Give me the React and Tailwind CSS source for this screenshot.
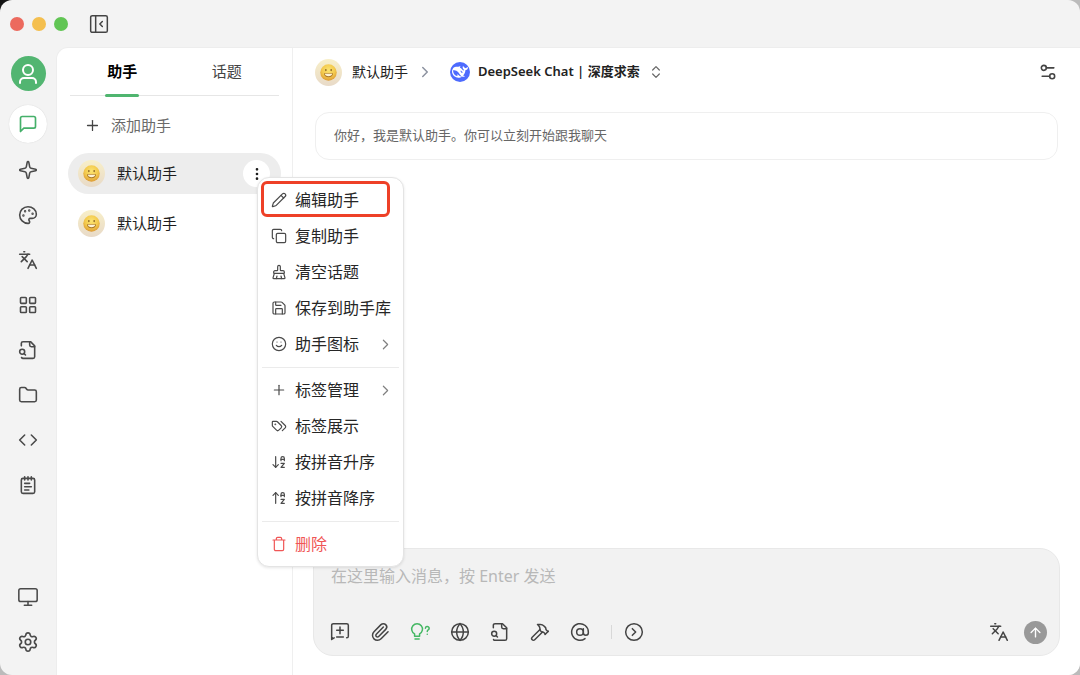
import React from 'react';
import {
  ArrowDownAZ,
  ArrowUp,
  ArrowUpAZ,
  AtSign,
  BrushCleaning,
  ChevronRight,
  ChevronsUpDown,
  CircleChevronRight,
  Code,
  Copy,
  EllipsisVertical,
  Folder,
  Globe,
  Hammer,
  Languages,
  LayoutGrid,
  Monitor,
  NotepadText,
  Palette,
  Paperclip,
  Pencil,
  Plus,
  Save,
  Settings,
  Settings2,
  Smile,
  Sparkle,
} from 'lucide-react';

function Stroke({ size = 20, strokeWidth = 1.6, children }) {
  return (
    <svg
      width={size}
      height={size}
      viewBox="0 0 24 24"
      fill="none"
      stroke="currentColor"
      strokeWidth={strokeWidth}
      strokeLinecap="round"
      strokeLinejoin="round"
      aria-hidden="true"
    >
      {children}
    </svg>
  );
}

const PanelIcon = (p) => (
  <Stroke {...p}>
    <rect x="2" y="2" width="20" height="20" rx="2" />
    <path d="M8 2v20M16 9l-3 3 3 3" />
  </Stroke>
);

const ChatIcon = (p) => (
  <Stroke {...p}>
    <path d="M21 15a2 2 0 0 1-2 2H7l-4 4V5a2 2 0 0 1 2-2h14a2 2 0 0 1 2 2z" />
  </Stroke>
);

const FileSearchIcon = (p) => (
  <Stroke {...p}>
    <path d="M14 2v4a2 2 0 0 0 2 2h4" />
    <path d="M4.268 21a2 2 0 0 0 1.727 1H18a2 2 0 0 0 2-2V7l-5-5H6a2 2 0 0 0-2 2v3" />
    <path d="m9 18-1.5-1.5" />
    <circle cx="5" cy="14" r="3" />
  </Stroke>
);

const NewTopicIcon = (p) => (
  <Stroke {...p}>
    <path d="m3 19-1 2V4a2 2 0 0 1 2-2h16a2 2 0 0 1 2 2v13a2 2 0 0 1-2 2M2 21l3-2" />
    <path d="M8 10h8M12 6v8M8 18h8" />
  </Stroke>
);

const TrashIcon = (p) => (
  <Stroke {...p}>
    <path d="M3 6h18M19 6v14a2 2 0 0 1-2 2H7a2 2 0 0 1-2-2V6M8 6V4a2 2 0 0 1 2-2h4a2 2 0 0 1 2 2v2" />
  </Stroke>
);

const TagsIcon = (p) => (
  <Stroke {...p}>
    <path d="m15 5 6.3 6.3a2.4 2.4 0 0 1 0 3.4L17 19" />
    <path d="M9.586 5.586A2 2 0 0 0 8.172 5H3a1 1 0 0 0-1 1v5.172a2 2 0 0 0 .586 1.414L8.29 18.29a2.426 2.426 0 0 0 3.42 0l3.58-3.58a2.426 2.426 0 0 0 0-3.42z" />
    <circle cx="6.5" cy="9.5" r=".5" fill="currentColor" />
  </Stroke>
);

const BulbIcon = (p) => (
  <Stroke {...p}>
    <path d="M5.5 14.3a6.500 6.500 0 1 1 6 0V17h-6zM6 20.500h5" />
    <path d="M18.500 7.500a2.200 2.200 0 1 1 3.300 1.900c-.7.4-1.100.9-1.100 1.900M20.700 14.600v.1" />
  </Stroke>
);

function UserIcon() {
  return (
    <Stroke size={24} strokeWidth={2}>
      <circle cx="12" cy="8" r="5" />
      <path d="M4 21v-1a4 4 0 0 1 4-4h8a4 4 0 0 1 4 4v1" />
    </Stroke>
  );
}

function DeepSeekLogo() {
  return (
    <span className="flex size-5 items-center justify-center rounded-full bg-[#4d6bfe] text-white">
      <svg width="16" height="16" viewBox="0 0 24 24" fill="currentColor" aria-hidden="true">
        <path d="M23.748 4.482c-.254-.124-.364.113-.512.234-.051.039-.094.09-.137.136-.372.397-.806.657-1.373.626-.829-.046-1.537.214-2.163.848-.133-.782-.575-1.248-1.247-1.548-.352-.156-.708-.311-.955-.65-.172-.241-.219-.51-.305-.774-.055-.16-.11-.323-.293-.35-.2-.031-.278.136-.356.276-.313.572-.434 1.202-.422 1.84.027 1.436.633 2.58 1.838 3.393.137.093.172.187.129.323-.082.28-.18.552-.266.833-.055.179-.137.217-.329.14a5.526 5.526 0 01-1.736-1.18c-.857-.828-1.631-1.742-2.597-2.458a11.365 11.365 0 00-.689-.471c-.985-.957.13-1.743.388-1.836.27-.098.093-.432-.779-.428-.872.004-1.67.295-2.687.684a3.055 3.055 0 01-.465.137 9.597 9.597 0 00-2.883-.102c-1.885.21-3.39 1.102-4.497 2.623C.082 8.606-.231 10.684.152 12.85c.403 2.284 1.569 4.175 3.36 5.653 1.858 1.533 3.997 2.284 6.438 2.14 1.482-.085 3.133-.284 4.994-1.86.47.234.962.327 1.78.397.63.059 1.236-.03 1.705-.128.735-.156.684-.837.419-.961-2.155-1.004-1.682-.595-2.113-.926 1.096-1.296 2.746-2.642 3.392-7.003.05-.347.007-.565 0-.845-.004-.17.035-.237.23-.256a4.173 4.173 0 001.545-.475c1.396-.763 1.96-2.015 2.093-3.517.02-.23-.004-.467-.247-.588zM11.581 18c-2.089-1.642-3.102-2.183-3.52-2.16-.392.024-.321.471-.235.763.09.288.207.486.371.739.114.167.192.416-.113.603-.673.416-1.842-.14-1.897-.167-1.361-.802-2.5-1.86-3.301-3.307-.774-1.393-1.224-2.887-1.298-4.482-.02-.386.093-.522.477-.592a4.696 4.696 0 011.529-.039c2.132.312 3.946 1.265 5.468 2.774.868.86 1.525 1.887 2.202 2.891.72 1.066 1.494 2.082 2.48 2.914.348.292.625.514.891.677-.802.09-2.14.11-3.054-.614zm1-6.44a.306.306 0 01.415-.287.302.302 0 01.2.288.306.306 0 01-.31.307.303.303 0 01-.304-.308zm3.11 1.596c-.2.081-.399.151-.59.16a1.245 1.245 0 01-.798-.254c-.274-.23-.47-.358-.552-.758a1.73 1.73 0 01.016-.588c.07-.327-.008-.537-.239-.727-.187-.156-.426-.199-.688-.199a.559.559 0 01-.254-.078c-.11-.054-.2-.19-.114-.358.028-.054.16-.186.192-.21.356-.202.767-.136 1.146.016.352.144.618.408 1.001.782.391.451.462.576.685.914.176.265.336.537.445.848.067.195-.019.354-.25.452z" />
      </svg>
    </span>
  );
}

function AssistantAvatar({ id }) {
  return (
    <span className="flex size-[27px] shrink-0 items-center justify-center rounded-full bg-linear-to-b from-[#f8efc8] to-[#e8dac8]">
      <svg width="17" height="17" viewBox="0 0 32 32" aria-hidden="true">
        <defs>
          <radialGradient id={id} cx="50%" cy="35%" r="65%">
            <stop offset="0" stopColor="#fbe472" />
            <stop offset="0.6" stopColor="#f3c94c" />
            <stop offset="1" stopColor="#dc9a35" />
          </radialGradient>
        </defs>
        <circle cx="16" cy="16" r="15.5" fill={`url(#${id})`} />
        <ellipse cx="11" cy="11.500" rx="1.500" ry="2.100" fill="#8a6020" />
        <ellipse cx="21" cy="11.500" rx="1.500" ry="2.100" fill="#8a6020" />
        <path d="M7.500 17.500h17c0 5-3.500 7.500-8.500 7.500s-8.500-2.500-8.500-7.500z" fill="#a87428" />
        <path d="M9 18.500h14c-.3 3.200-3 4.500-7 4.500s-6.700-1.300-7-4.500z" fill="#fdf3d4" />
      </svg>
    </span>
  );
}

const NAV = [
  ['绘图助手', Sparkle],
  ['绘画', Palette],
  ['翻译', Languages],
  ['小程序', LayoutGrid],
  ['知识库', FileSearchIcon],
  ['文件', Folder],
  ['代码', Code],
  ['笔记', NotepadText],
];

function NavRail() {
  return (
    <nav className="flex w-14 shrink-0 flex-col items-center pt-[9px] pb-[11px] text-[#4a4a4a]">
      <button aria-label="用户" className="flex size-[35px] items-center justify-center rounded-full bg-[#52b571] text-white">
        <UserIcon />
      </button>
      <button aria-label="聊天" className="mt-[14px] flex size-[38px] items-center justify-center rounded-full bg-white text-[#45b06a] shadow-[0_0_1px_#00000030]">
        <ChatIcon size={20} strokeWidth={2} />
      </button>
      <div className="mt-1 flex flex-1 flex-col">
        {NAV.map(([label, Icon]) => (
          <button key={label} aria-label={label} className="flex h-[45px] w-10 items-center justify-center">
            <Icon size={20} strokeWidth={1.9} />
          </button>
        ))}
      </div>
      <button aria-label="显示" className="flex h-[45px] w-10 items-center justify-center">
        <Monitor size={22} strokeWidth={1.7} />
      </button>
      <button aria-label="设置" className="flex h-[45px] w-10 items-center justify-center">
        <Settings size={22} strokeWidth={1.8} />
      </button>
    </nav>
  );
}

const MENU_GROUPS = [
  [
    ['编辑助手', Pencil],
    ['复制助手', Copy],
    ['清空话题', BrushCleaning],
    ['保存到助手库', Save],
    ['助手图标', Smile, true],
  ],
  [
    ['标签管理', Plus, true],
    ['标签展示', TagsIcon],
    ['按拼音升序', ArrowDownAZ],
    ['按拼音降序', ArrowUpAZ],
  ],
];

function MenuItem({ label, icon: Icon, submenu, danger }) {
  return (
    <button
      role="menuitem"
      className={
        'flex h-9 w-full items-center gap-2 pr-[5px] pl-[9px] text-base whitespace-nowrap ' +
        (danger ? 'text-[#f05656]' : 'text-[#262626]')
      }
    >
      <span className={'flex w-4 shrink-0 justify-center ' + (danger ? '' : 'text-[#4a4a4a]')}>
        <Icon size={16} strokeWidth={1.8} />
      </span>
      <span>{label}</span>
      {submenu && <ChevronRight className="ml-auto text-[#808080]" size={17} strokeWidth={1.7} />}
    </button>
  );
}

function ContextMenu() {
  return (
    <div
      role="menu"
      className="absolute top-[17px] left-[14px] z-10 w-[147px] rounded-xl border border-[#e4e4e4] bg-white p-1 shadow-[0_1px_3px_#0000001a]"
    >
      <span className="pointer-events-none absolute top-[3px] left-[3px] h-[36px] w-[129px] rounded-md border-[3px] border-[#ee4027]" />
      {MENU_GROUPS.map((group, i) => (
        <React.Fragment key={i}>
          {group.map(([label, icon, submenu]) => (
            <MenuItem key={label} label={label} icon={icon} submenu={submenu} />
          ))}
          <div className="flex h-[10px] items-center">
            <div className="h-px w-full bg-[#ebebeb]" />
          </div>
        </React.Fragment>
      ))}
      <MenuItem label="删除" icon={TrashIcon} danger />
    </div>
  );
}

function AssistantPanel() {
  return (
    <aside className="flex w-[236px] shrink-0 flex-col border-r border-[#efefef] pr-[11px] pl-[11px]">
      <div role="tablist" className="mx-[2px] flex h-12 border-b border-[#e6e6e6] text-[15px]">
        <button role="tab" aria-selected="true" className="relative flex-1 font-bold text-black">
          助手
          <span className="absolute -bottom-[2px] left-1/2 h-[3px] w-[34px] -translate-x-1/2 rounded-full bg-[#4fb56f]" />
        </button>
        <button role="tab" aria-selected="false" className="flex-1 text-[#444]">
          话题
        </button>
      </div>
      <button className="mt-[9px] flex h-10 items-center gap-[10px] px-4 text-[15px] text-[#6a6a6a]">
        <Plus className="text-[#444]" size={17} strokeWidth={1.8} />
        添加助手
      </button>
      <div className="mt-2 flex flex-col gap-[9px] text-[15px] text-[#1c1c1c]">
        <div className="flex h-[41px] items-center rounded-full bg-[#ededed] pr-[11px] pl-[10px]">
          <AssistantAvatar id="face-a" />
          <a href="#assistant-1" className="ml-3 flex-1">默认助手</a>
          <div className="relative">
            <button aria-label="更多" className="flex size-[27px] items-center justify-center rounded-full bg-white">
              <EllipsisVertical size={16} strokeWidth={2} />
            </button>
            <ContextMenu />
          </div>
        </div>
        <div className="flex h-[41px] items-center pr-[11px] pl-[10px]">
          <AssistantAvatar id="face-b" />
          <a href="#assistant-2" className="ml-3 flex-1">默认助手</a>
        </div>
      </div>
    </aside>
  );
}

const TOOLS = [
  ['新话题', NewTopicIcon],
  ['附件', Paperclip],
  ['思考', BulbIcon],
  ['联网', Globe],
  ['知识库', FileSearchIcon],
  ['工具', Hammer],
  ['提及模型', AtSign],
];

function Composer() {
  return (
    <div className="mx-5 mb-[19px] rounded-[20px] border border-[#e8e8e8] bg-[#f2f2f2]">
      <textarea
        aria-label="消息"
        rows={1}
        placeholder="在这里输入消息，按 Enter 发送"
        className="block h-[60px] w-full resize-none bg-transparent px-[17px] pt-[15px] text-base leading-6 outline-none placeholder:text-[#b8b8b8]"
      />
      <div className="flex h-[46px] items-center pr-3 pl-[6px] text-[#444]">
        {TOOLS.map(([label, Icon]) => (
          <button
            key={label}
            aria-label={label}
            className={
              'flex h-8 w-10 items-center justify-center ' + (label === '思考' ? 'text-[#45b864]' : '')
            }
          >
            <Icon size={20} strokeWidth={1.8} />
          </button>
        ))}
        <div className="ml-[11px] h-[14px] w-px bg-[#d8d8d8]" />
        <button aria-label="展开" className="ml-3 flex size-5 items-center justify-center">
          <CircleChevronRight size={20} strokeWidth={1.8} />
        </button>
        <button aria-label="翻译" className="ml-auto flex size-5 items-center justify-center">
          <Languages size={20} strokeWidth={1.8} />
        </button>
        <button aria-label="发送" className="ml-[15px] flex size-[23px] items-center justify-center rounded-full bg-[#999] text-white">
          <ArrowUp size={15} strokeWidth={2.2} />
        </button>
      </div>
    </div>
  );
}

export default function App() {
  return (
    <div className="h-screen bg-linear-to-br from-[#111] via-[#bbb] via-10% to-[#bbb] font-['Noto_Sans','Noto_Sans_CJK_SC',sans-serif]">
      <div className="flex h-full flex-col overflow-hidden rounded-xl bg-[#f3f3f3]">
        <header className="flex h-[47px] shrink-0 items-center px-[10px]">
          <div className="flex gap-2">
            <span className="size-[14px] rounded-full bg-[#ec6a5e]" />
            <span className="size-[14px] rounded-full bg-[#f4bf4f]" />
            <span className="size-[14px] rounded-full bg-[#61c554]" />
          </div>
          <button aria-label="收起侧栏" className="ml-[21px] text-[#444]">
            <PanelIcon size={20} strokeWidth={1.8} />
          </button>
        </header>
        <div className="flex min-h-0 flex-1">
          <NavRail />
          <div className="flex min-w-0 flex-1 rounded-tl-xl border-t border-l border-[#ededed] bg-white">
            <AssistantPanel />
            <main className="flex min-w-0 flex-1 flex-col">
              <div className="flex h-12 shrink-0 items-center px-[22px] text-[#222]">
                <button className="flex items-center gap-[10px] text-sm">
                  <AssistantAvatar id="face-c" />
                  默认助手
                </button>
                <ChevronRight className="ml-2 text-[#8c92a0]" size={18} strokeWidth={2} />
                <button className="ml-4 flex items-center gap-2 text-[13px] font-semibold">
                  <DeepSeekLogo />
                  DeepSeek Chat | 深度求索
                  <ChevronsUpDown className="text-[#666]" size={16} strokeWidth={1.8} />
                </button>
                <button aria-label="对话设置" className="ml-auto text-[#444]">
                  <Settings2 size={20} strokeWidth={1.9} />
                </button>
              </div>
              <div className="mx-[22px] mt-4 flex h-12 items-center rounded-[14px] border border-[#efefef] px-[18px] text-[13px] text-[#666]">
                你好，我是默认助手。你可以立刻开始跟我聊天
              </div>
              <div className="flex-1" />
              <Composer />
            </main>
          </div>
        </div>
      </div>
    </div>
  );
}
